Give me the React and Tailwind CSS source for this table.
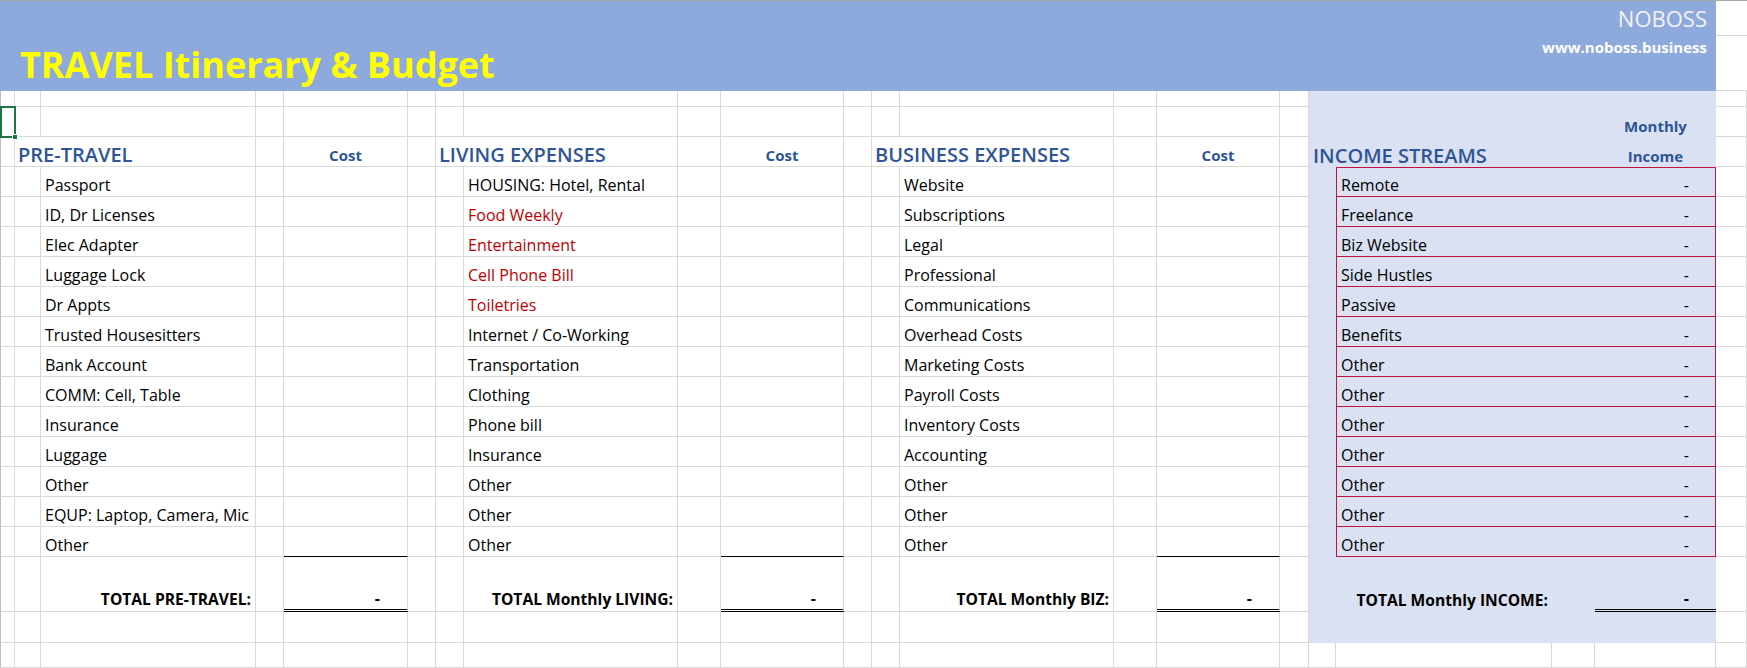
const GRID =
  "grid grid-cols-[15px_26px_215px_28px_124px_28px_28px_214px_43px_123px_28px_28px_214px_43px_123px_29px_27px_216px_43px_121px_31px]";
const LINE = "border-r border-b border-[#D9D9D9]";
const FILL = "bg-[#D9E1F2]";
const SPAN = { 1: "", 2: "col-span-2", 3: "col-span-3", 4: "col-span-4" };
const TXT = "flex items-end pb-[1px] whitespace-nowrap leading-[20px]";
const BLUE = "text-[#2F5597]";

const sections = [
  {
    title: "PRE-TRAVEL",
    total: "TOTAL PRE-TRAVEL:",
    items: [
      "Passport",
      "ID, Dr Licenses",
      "Elec Adapter",
      "Luggage Lock",
      "Dr Appts",
      "Trusted Housesitters",
      "Bank Account",
      "COMM: Cell, Table",
      "Insurance",
      "Luggage",
      "Other",
      "EQUP: Laptop, Camera, Mic",
      "Other",
    ],
  },
  {
    title: "LIVING EXPENSES",
    total: "TOTAL Monthly LIVING:",
    red: [1, 2, 3, 4],
    items: [
      "HOUSING: Hotel, Rental",
      "Food Weekly",
      "Entertainment",
      "Cell Phone Bill",
      "Toiletries",
      "Internet / Co-Working",
      "Transportation",
      "Clothing",
      "Phone bill",
      "Insurance",
      "Other",
      "Other",
      "Other",
    ],
  },
  {
    title: "BUSINESS EXPENSES",
    total: "TOTAL Monthly BIZ:",
    items: [
      "Website",
      "Subscriptions",
      "Legal",
      "Professional",
      "Communications",
      "Overhead Costs",
      "Marketing Costs",
      "Payroll Costs",
      "Inventory Costs",
      "Accounting",
      "Other",
      "Other",
      "Other",
    ],
  },
];

const income = [
  "Remote",
  "Freelance",
  "Biz Website",
  "Side Hustles",
  "Passive",
  "Benefits",
  "Other",
  "Other",
  "Other",
  "Other",
  "Other",
  "Other",
  "Other",
];

function Cell({ span = 1, className = LINE, children }) {
  return <div className={`${SPAN[span]} ${className}`}>{children}</div>;
}

function Plain({ n }) {
  return Array.from({ length: n }, (_, i) => <Cell key={i} />);
}

const First = () => <Cell className={`${LINE} border-l border-l-[#BDBDBD]`} />;

function Header() {
  return (
    <div className="flex h-[91px] border-t border-[#A6A6A6]">
      <div className="flex w-[1716px] justify-between bg-[#8EA9DB]">
        <div className="flex items-end pb-[6px] pl-[20px]">
          <span className="text-[36px] font-bold leading-[40px] text-[#FFFF00]">
            TRAVEL Itinerary &amp; Budget
          </span>
        </div>
        <div className="flex flex-col items-end pr-[9px] pt-[4px]">
          <span className="text-[22px] leading-[26px] text-[#F2F2F2]">NOBOSS</span>
          <span className="mt-[7px] text-[15px] font-bold leading-[18px] text-white">
            www.noboss.business
          </span>
        </div>
      </div>
      <div className="flex w-[31px] flex-col">
        <div className="h-[35px] border-b border-[#D9D9D9]" />
        <div className="flex-1 border-b border-[#D9D9D9]" />
      </div>
    </div>
  );
}

export default function App() {
  return (
    <div className="relative h-[668px] w-[1747px] overflow-hidden bg-white font-['Open_Sans',sans-serif] text-[16px] text-black">
      <Header />

      {/* blank strip under the banner */}
      <div className={`${GRID} h-[16px]`}>
        <First />
        <Plain n={15} />
        <Cell span={4} className={FILL} />
        <Cell />
      </div>

      {/* Monthly */}
      <div className={`${GRID} h-[30px]`}>
        <First />
        <Plain n={15} />
        <Cell span={3} className={FILL} />
        <Cell className={`${FILL} ${TXT} justify-center`}>
          <span className={`text-[15px] font-bold ${BLUE}`}>Monthly</span>
        </Cell>
        <Cell />
      </div>

      {/* section titles */}
      <div className={`${GRID} h-[30px]`}>
        <First />
        {sections.map((s) => [
          <Cell key={s.title} span={2} className={`${LINE} ${TXT} pl-[3px]`}>
            <span className={`text-[20px] font-semibold ${BLUE}`}>{s.title}</span>
          </Cell>,
          <Cell key={s.title + "g"} />,
          <Cell key={s.title + "c"} className={`${LINE} ${TXT} justify-center`}>
            <span className={`text-[15px] font-bold ${BLUE}`}>Cost</span>
          </Cell>,
          <Cell key={s.title + "s"} />,
        ])}
        <Cell span={3} className={`${FILL} ${TXT} pl-[4px]`}>
          <span className={`text-[20px] font-semibold ${BLUE}`}>INCOME STREAMS</span>
        </Cell>
        <Cell className={`${FILL} ${TXT} justify-center`}>
          <span className={`text-[15px] font-bold ${BLUE}`}>Income</span>
        </Cell>
        <Cell />
      </div>

      {/* line items */}
      {income.map((inc, i) => (
        <div key={i} className={`${GRID} h-[30px]`}>
          <First />
          {sections.map((s) => [
            <Cell key={s.title + "n"} />,
            <Cell key={s.title} className={`${LINE} ${TXT} pl-[4px]`}>
              <span className={s.red && s.red.includes(i) ? "text-[#C00000]" : ""}>{s.items[i]}</span>
            </Cell>,
            <Cell key={s.title + "g"} />,
            <Cell
              key={s.title + "c"}
              className={i === 12 ? "border-r border-b border-[#D9D9D9] border-b-black" : LINE}
            />,
            <Cell key={s.title + "s"} />,
          ])}
          <Cell className={FILL} />
          <Cell
            span={3}
            className={`${FILL} ${TXT} justify-between border-x border-b border-[#C0143C] pl-[4px] pr-[26px] ${
              i === 0 ? "border-t" : ""
            }`}
          >
            <span>{inc}</span>
            <span>-</span>
          </Cell>
          <Cell />
        </div>
      ))}

      {/* totals */}
      <div className={`${GRID} h-[55px]`}>
        <First />
        {sections.map((s) => [
          <Cell key={s.title + "n"} />,
          <Cell key={s.title} className={`${LINE} ${TXT} justify-end pr-[4px] pb-[2px]`}>
            <span className="text-[15.6px] font-bold">{s.total}</span>
          </Cell>,
          <Cell key={s.title + "g"} />,
          <Cell
            key={s.title + "c"}
            className={`border-r border-[#D9D9D9] border-b-[3px] border-double border-b-black ${TXT} justify-end pr-[27px]`}
          >
            <span className="font-bold">-</span>
          </Cell>,
          <Cell key={s.title + "s"} />,
        ])}
        <Cell className={FILL} />
        <Cell className={`${FILL} ${TXT} justify-end pr-[4px] pb-[2px]`}>
          <span className="text-[15.6px] font-bold">TOTAL Monthly INCOME:</span>
        </Cell>
        <Cell className={FILL} />
        <Cell className={`${FILL} border-b-[3px] border-double border-black ${TXT} justify-end pr-[27px]`}>
          <span className="font-bold">-</span>
        </Cell>
        <Cell />
      </div>

      <div className={`${GRID} h-[31px]`}>
        <First />
        <Plain n={15} />
        <Cell span={4} className={FILL} />
        <Cell />
      </div>

      <div className={`${GRID} h-[25px]`}>
        <First />
        <Plain n={20} />
      </div>

      {/* active cell selection */}
      <div className="absolute left-0 top-[106px] h-[32px] w-[16px] border-2 border-[#217346]">
        <div className="absolute -bottom-[4px] -right-[4px] h-[6px] w-[6px] border border-white bg-[#217346]" />
      </div>
    </div>
  );
}
